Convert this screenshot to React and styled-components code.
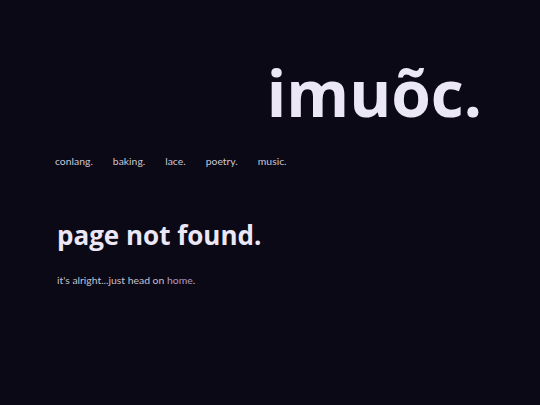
import React from "react";
import styled, { createGlobalStyle } from "styled-components";

const GlobalStyle = createGlobalStyle`
  html, body {
    margin: 0;
    padding: 0;
    background-color: #0b0915;
  }
  body {
    font-family: "Open Sans", "Noto Sans", sans-serif;
    color: #e9e5f5;
  }
`;

const Page = styled.div`
  min-height: 405px;
  background-color: #0b0915;
  padding: 0 55px;
`;

const Header = styled.header`
  display: flex;
  justify-content: flex-end;
  padding-top: 49px;
  padding-right: 3px;
`;

const Title = styled.h1`
  margin: 0;
  font-size: 64px;
  font-weight: 700;
  line-height: 88px;
  color: #ebe7f6;
`;

const Nav = styled.nav`
  display: flex;
  gap: 20px;
  margin-top: 18px;
`;

const NavLink = styled.a`
  font-family: "Lato", "Open Sans", sans-serif;
  font-size: 10.4px;
  color: #c9c5d6;
  text-decoration: none;
  cursor: pointer;
`;

const Main = styled.main`
  margin-top: 50px;
  padding-left: 2px;
`;

const Heading = styled.h2`
  margin: 0;
  font-size: 26px;
  font-weight: 700;
  line-height: 36px;
  color: #ebe7f6;
`;

const Note = styled.p`
  margin: 21px 0 0;
  font-family: "Lato", "Open Sans", sans-serif;
  font-size: 10.4px;
  color: #c4c0d1;
`;

const HomeLink = styled.a`
  color: #a99ccf;
  text-decoration: none;
`;

const links = ["conlang.", "baking.", "lace.", "poetry.", "music."];

const App = () => {
  return (
    <>
      <GlobalStyle />
      <Page>
        <Header>
          <Title>imuõc.</Title>
        </Header>
        <Nav>
          {links.map((l) => (
            <NavLink key={l}>{l}</NavLink>
          ))}
        </Nav>
        <Main>
          <Heading>page not found.</Heading>
          <Note>
            it's alright...just head on <HomeLink>home</HomeLink>.
          </Note>
        </Main>
      </Page>
    </>
  );
};

export default App;
